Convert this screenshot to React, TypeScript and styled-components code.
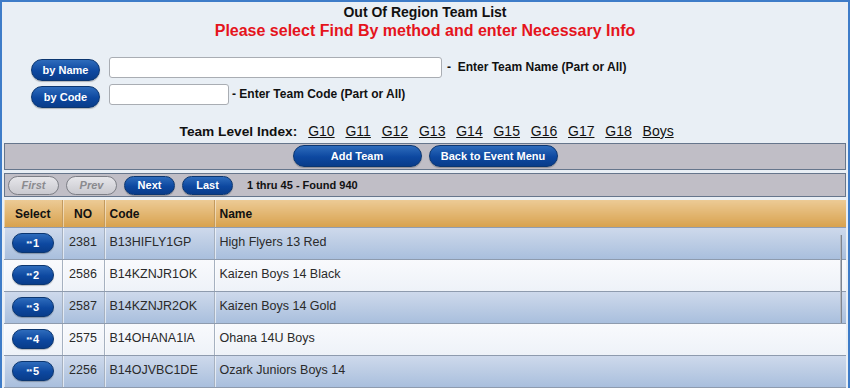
import React from "react";
import styled, { createGlobalStyle } from "styled-components";

const Global = createGlobalStyle`
  html, body { margin: 0; padding: 0; background: #e9eff5; }
  body { font-family: "Liberation Sans", Arial, sans-serif; }
  * { box-sizing: border-box; }
`;

const Page = styled.div`
  width: 850px;
  height: 388px;
  overflow: hidden;
  background: #e9eff5;
  border: 2px solid #3e7cc8;
  border-bottom: none;
  display: flex;
  flex-direction: column;
  padding: 0 1px;
`;

const Title = styled.div`
  text-align: center;
  font-size: 14px;
  font-weight: bold;
  color: #111;
  line-height: 17px;
  margin-top: 2px;
`;

const Subtitle = styled.div`
  text-align: center;
  font-size: 16px;
  font-weight: bold;
  color: #e5141c;
  line-height: 20px;
`;

const Form = styled.div`
  margin-top: 16px;
  padding-left: 28px;
  display: flex;
  flex-direction: column;
  gap: 3px;
`;

const FormRow = styled.div`
  display: flex;
  align-items: flex-start;
  height: 24px;
`;

const PillButton = styled.button<{ $w: number; $h?: number }>`
  width: ${(p) => p.$w}px;
  height: ${(p) => p.$h ?? 22}px;
  border-radius: 12px;
  border: 1px solid #0b3670;
  background: linear-gradient(#2e6cbc, #0d48a0 55%, #093c8a);
  color: #fff;
  font-family: "Liberation Sans", Arial, sans-serif;
  font-weight: bold;
  font-size: 11px;
  padding: 0;
  display: flex;
  align-items: center;
  justify-content: center;
  box-shadow: 0 1px 1px rgba(0, 0, 0, 0.25);
`;

const DisabledPill = styled.button`
  width: 51px;
  height: 19px;
  border-radius: 10px;
  border: 1px solid #7d7f86;
  background: linear-gradient(#e6e6ea, #c9c9cf);
  color: #8a8a8e;
  font-family: "Liberation Sans", Arial, sans-serif;
  font-weight: bold;
  font-style: italic;
  font-size: 11px;
  padding: 0;
`;

const FormButtonWrap = styled.div`
  margin-top: 2px;
  margin-right: 9px;
`;

const TextInput = styled.input<{ $w: number }>`
  width: ${(p) => p.$w}px;
  height: 21px;
  border: 1px solid #a9adb3;
  border-radius: 3px;
  background: #fff;
  margin: 0;
`;

const Hint = styled.span<{ $gap: number }>`
  margin-left: ${(p) => p.$gap}px;
  font-size: 12px;
  font-weight: bold;
  color: #111;
  line-height: 21px;
  white-space: pre;
`;

const LevelIndex = styled.div`
  margin-top: 15px;
  display: flex;
  justify-content: center;
  align-items: baseline;
  padding-left: 14px;
  height: 18px;
`;

const LevelLabel = styled.span`
  font-size: 13.7px;
  font-weight: bold;
  color: #111;
  margin-right: 11px;
`;

const LevelLink = styled.a`
  font-size: 14px;
  color: #111;
  text-decoration: underline;
  margin-right: 10.8px;
  cursor: pointer;
`;

const Bar = styled.div<{ $h: number; $justify: string }>`
  height: ${(p) => p.$h}px;
  margin: 0 1px;
  background: #c0bec6;
  border: 1px solid #66768c;
  display: flex;
  align-items: center;
  justify-content: ${(p) => p.$justify};
  gap: 7px;
  padding: 0 3px;
`;

const ActionBar = styled(Bar)`
  margin-top: 3px;
`;

const PagerBar = styled(Bar)`
  margin-top: 3px;
`;

const PagerText = styled.span`
  font-size: 11px;
  font-weight: bold;
  color: #111;
  margin-left: 7px;
`;

const TableWrap = styled.div`
  position: relative;
  margin: 3px 1px 0;
`;

const Table = styled.table`
  width: 100%;
  border-collapse: collapse;
  font-family: "Liberation Sans", Arial, sans-serif;
  table-layout: fixed;
`;

const HeadCell = styled.th<{ $w?: number; $align: string }>`
  ${(p) => (p.$w ? `width: ${p.$w}px;` : "")}
  height: 27px;
  background: linear-gradient(#ecca95, #d8a24e);
  font-size: 12px;
  font-weight: bold;
  color: #111;
  text-align: ${(p) => p.$align};
  padding: 1px 5px 0;
  border-right: 1px solid #c39a5e;
  border-bottom: 1px solid #8f9db2;
  box-shadow: inset 1px 0 0 rgba(255, 255, 255, 0.45);
  &:last-child { border-right: none; }
`;

const Row = styled.tr<{ $alt: boolean }>`
  height: 32px;
  background: ${(p) =>
    p.$alt
      ? "linear-gradient(#f9fafd, #eef2f8)"
      : "linear-gradient(#cfdaec, #a9bfdd)"};
`;

const Cell = styled.td<{ $align: string; $button?: boolean }>`
  font-size: 12.5px;
  color: #2a2a2a;
  text-align: ${(p) => p.$align};
  padding: ${(p) => (p.$button ? "0 5px" : "0 5px 3px")};
  border-right: 1px solid #a6b1c0;
  border-bottom: 1px solid #8e9bae;
  box-shadow: inset 1px 0 0 rgba(255, 255, 255, 0.6);
  &:last-child { border-right: none; }
`;

const SelectWrap = styled.div`
  display: flex;
  justify-content: center;
`;

const Stars = styled.span`
  font-size: 7px;
  vertical-align: 3px;
  margin-right: 1px;
`;

const ScrollThumb = styled.div`
  position: absolute;
  right: 4px;
  top: 35px;
  width: 2px;
  height: 88px;
  background: #7d8490;
  border-left: 1px solid #b3b8c0;
`;

const rows = [
  { n: 1, no: "2381", code: "B13HIFLY1GP", name: "High Flyers 13 Red" },
  { n: 2, no: "2586", code: "B14KZNJR1OK", name: "Kaizen Boys 14 Black" },
  { n: 3, no: "2587", code: "B14KZNJR2OK", name: "Kaizen Boys 14 Gold" },
  { n: 4, no: "2575", code: "B14OHANA1IA", name: "Ohana 14U Boys" },
  { n: 5, no: "2256", code: "B14OJVBC1DE", name: "Ozark Juniors Boys 14" },
];

const levels = ["G10", "G11", "G12", "G13", "G14", "G15", "G16", "G17", "G18", "Boys"];

export default function App() {
  return (
    <>
      <Global />
      <Page>
        <Title>Out Of Region Team List</Title>
        <Subtitle>Please select Find By method and enter Necessary Info</Subtitle>
        <Form>
          <FormRow>
            <FormButtonWrap>
              <PillButton $w={69}>by Name</PillButton>
            </FormButtonWrap>
            <TextInput $w={333} />
            <Hint $gap={5}>{"-  Enter Team Name (Part or All)"}</Hint>
          </FormRow>
          <FormRow>
            <FormButtonWrap>
              <PillButton $w={69}>by Code</PillButton>
            </FormButtonWrap>
            <TextInput $w={120} />
            <Hint $gap={3}>{"- Enter Team Code (Part or All)"}</Hint>
          </FormRow>
        </Form>
        <LevelIndex>
          <LevelLabel>Team Level Index:</LevelLabel>
          {levels.map((l) => (
            <LevelLink key={l}>{l}</LevelLink>
          ))}
        </LevelIndex>
        <ActionBar $h={30} $justify="center">
          <PillButton $w={129}>Add Team</PillButton>
          <PillButton $w={129}>Back to Event Menu</PillButton>
        </ActionBar>
        <PagerBar $h={26} $justify="flex-start">
          <DisabledPill>First</DisabledPill>
          <DisabledPill>Prev</DisabledPill>
          <PillButton $w={51} $h={19}>Next</PillButton>
          <PillButton $w={51} $h={19}>Last</PillButton>
          <PagerText>1 thru 45 - Found 940</PagerText>
        </PagerBar>
        <TableWrap>
          <Table>
            <thead>
              <tr>
                <HeadCell $w={58} $align="center">Select</HeadCell>
                <HeadCell $w={42} $align="center">NO</HeadCell>
                <HeadCell $w={110} $align="left">Code</HeadCell>
                <HeadCell $align="left">Name</HeadCell>
              </tr>
            </thead>
            <tbody>
              {rows.map((r, i) => (
                <Row key={r.n} $alt={i % 2 === 1}>
                  <Cell $align="center" $button>
                    <SelectWrap>
                      <PillButton $w={42} $h={20}>
                        <Stars>**</Stars>
                        {r.n}
                      </PillButton>
                    </SelectWrap>
                  </Cell>
                  <Cell $align="center">{r.no}</Cell>
                  <Cell $align="left">{r.code}</Cell>
                  <Cell $align="left">{r.name}</Cell>
                </Row>
              ))}
            </tbody>
          </Table>
          <ScrollThumb />
        </TableWrap>
      </Page>
    </>
  );
}
